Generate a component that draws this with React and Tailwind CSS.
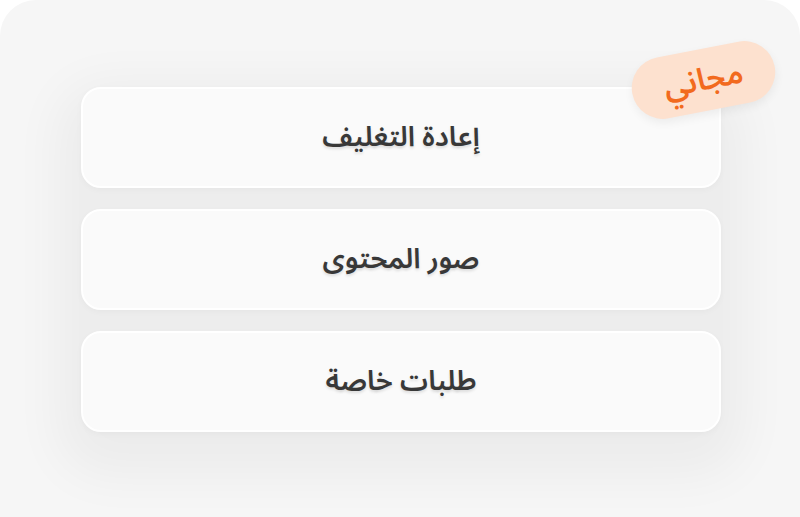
const OPTIONS = ['إعادة التغليف', 'صور المحتوى', 'طلبات خاصة'];

const App = () => {
  return (
    <div className="w-[800px] h-[517px] bg-white overflow-hidden"
      style={{ fontFamily: '"Noto Sans Arabic", "Noto Sans", "DejaVu Sans", sans-serif' }}>
      <div className="w-full h-[540px] bg-[#f6f6f6] rounded-t-[36px] pt-[87px]">
        <div className="relative w-[640px] ml-[81px]">
          {/* Options list */}
          <div className="flex flex-col gap-[21px] rounded-[24px] bg-[#ededed] shadow-[0_20px_50px_24px_rgba(0,0,0,0.045)]">
            {OPTIONS.map((o) => (
              <div key={o} dir="rtl"
                className="h-[101px] rounded-[20px] bg-[#fafafa] border-2 border-white shadow-[0_2px_6px_rgba(0,0,0,0.03)] flex items-center justify-center">
                <span className="text-[28px] font-semibold text-[#383838] [text-shadow:0_2px_3px_rgba(0,0,0,0.12)]">{o}</span>
              </div>
            ))}
          </div>

          {/* Badge */}
          <div dir="rtl" className="absolute left-[550px] top-[-38px] w-[145px] h-[62px] rounded-full bg-[#fde1cf] -rotate-[11deg] shadow-[0_4px_10px_rgba(0,0,0,0.06)] flex items-center justify-center">
            <span className="text-[31px] font-semibold text-[#f26a1e]">مجاني</span>
          </div>
        </div>
      </div>
    </div>
  );
};

export default App;
